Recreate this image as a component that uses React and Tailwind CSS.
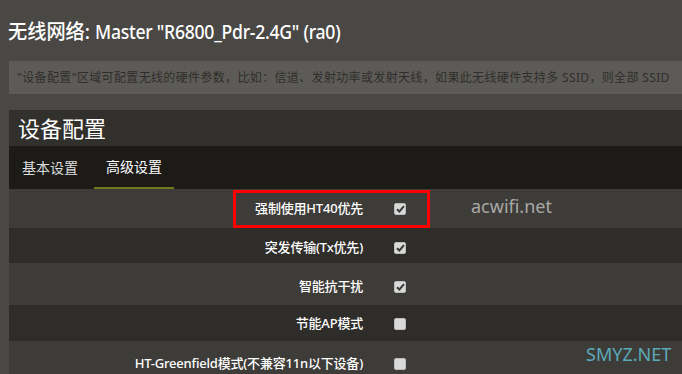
import React from "react";

const F = { fontFamily: '"Noto Sans", "Noto Sans CJK SC", sans-serif' };

function Check({ checked }) {
  return (
    <div className="w-[12px] h-[12px] rounded-[2px] bg-[#d9d9d9] border border-[#bdbdbd] flex items-center justify-center">
      {checked && (
        <svg width="9" height="8" viewBox="0 0 9 8">
          <path d="M1 4.2 L3.4 6.5 L8 1.2" stroke="#3a3a3a" strokeWidth="2" fill="none" />
        </svg>
      )}
    </div>
  );
}

const rows = [
  { label: "强制使用HT40优先", checked: true, h: "h-[39px]", bg: "bg-[#3e3c38]", pt: "pt-[1px]" },
  { label: "突发传输(Tx优先)", checked: true, h: "h-[35px]", bg: "bg-[#2f2d2a]", pt: "pt-[5px]" },
  { label: "智能抗干扰", checked: true, h: "h-[42px]", bg: "bg-[#3e3c38]", pt: "pt-[6px]" },
  { label: "节能AP模式", checked: false, h: "h-[36px]", bg: "bg-[#2f2d2a]", pt: "pt-[1px]" },
  { label: "HT-Greenfield模式(不兼容11n以下设备)", checked: false, h: "h-[36px]", bg: "bg-[#3e3c38]", pt: "pt-[10px]" },
];

export default function App() {
  return (
    <div className="w-[682px] h-[374px] overflow-hidden bg-[#4a4844] relative" style={F}>
      <div className="h-[61px] pl-[8px] pt-[16px]">
        <div className="text-[20px] leading-[32px] text-white font-medium whitespace-nowrap flex">
          <span className="inline-block origin-left scale-x-[0.96]">无线网络:</span>
          <span className="inline-block ml-[2px] origin-left scale-x-[0.88] tracking-[-0.3px]">Master "R6800_Pdr-2.4G" (ra0)</span>
        </div>
      </div>
      <div className="ml-[9px] h-[33px] bg-[#5d5b57] flex items-center pl-[8px] overflow-hidden">
        <div className="text-[12px] tracking-[0.35px] text-[#2f2e2b] whitespace-nowrap">
          "设备配置"区域可配置无线的硬件参数，比如：信道、发射功率或发射天线，如果此无线硬件支持多 SSID，则全部 SSID
        </div>
      </div>
      <div className="ml-[9px] mt-[16px]">
        <div className="h-[36px] bg-[#31302c] flex items-center pl-[9px]">
          <span className="text-[22px] text-white">设备配置</span>
        </div>
        <div className="h-[43px] bg-[#1c1b18] flex items-end pl-[4px]">
          <div className="h-[43px] px-[9px] flex items-center">
            <span className="text-[14px] text-[#dedede]">基本设置</span>
          </div>
          <div className="h-[43px] ml-[7px] w-[80px] flex flex-col">
            <div className="flex-1 flex items-center justify-center">
              <span className="text-[14px] text-white">高级设置</span>
            </div>
            <div className="h-[2px] bg-[#6f7a1c]" />
          </div>
        </div>
        {rows.map((r, i) => (
          <div key={i} className={`${r.h} ${r.bg} flex items-center ${r.pt}`}>
            <div className="w-[354px] text-right text-[13px] text-white font-medium whitespace-nowrap tracking-[-0.2px]">
              {r.label}
            </div>
            <div className="ml-[31px]">
              <Check checked={r.checked} />
            </div>
          </div>
        ))}
      </div>
      <div className="absolute left-[233px] top-[190px] w-[197px] h-[38px] border-[3px] border-[#ff0000]" />
      <div className="absolute left-[471px] top-[193px] text-[18px] text-[#a8a8a6]">acwifi.net</div>
      <div className="absolute left-[586px] top-[341px] text-[18px] text-[#5ba9b9]">SMYZ.NET</div>
    </div>
  );
}
